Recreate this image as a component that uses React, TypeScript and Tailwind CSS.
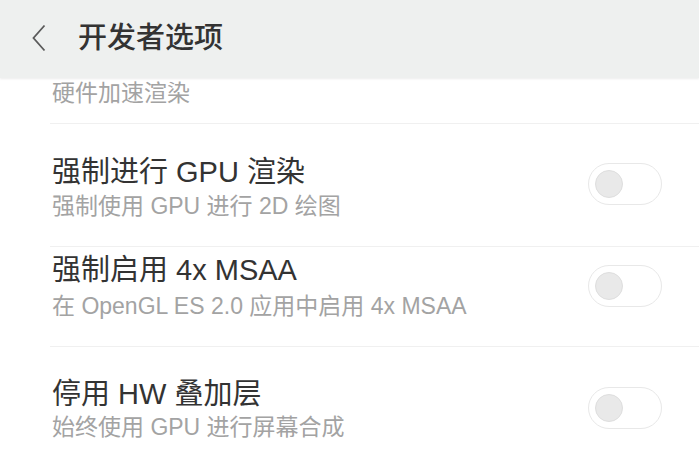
const font = { fontFamily: '"Liberation Sans", "Noto Sans CJK SC", sans-serif' };

const Toggle = ({ top }: { top: string }) => (
  <div className={`${top} mr-[37px] w-[74px] h-[42px] rounded-full border-[1.5px] border-[#e8e8e8] bg-white flex items-center pl-[6px] shrink-0`}>
    <div className="w-[28px] h-[28px] rounded-full bg-[#e9e9e9] border border-[#dedede]" />
  </div>
);

const App = () => {
  // developer options screen
  return (
    <div className="w-[699px] h-[455px] overflow-hidden bg-white" style={font}>
      <div className="h-[78px] bg-[#eef0ef] flex items-center shadow-[0_1px_2px_rgba(0,0,0,0.08)] relative">
        <svg width="14" height="28" viewBox="0 0 14 28" className="ml-[32px] mt-[-2px]">
          <path d="M12.5 1.5 L1.5 14 L12.5 26.5" fill="none" stroke="#5a5a5a" strokeWidth="1.8" />
        </svg>
        <span className="ml-[32px] text-[29px] leading-[36px] font-medium text-[#333] mt-[-3px]">
          开发者选项
        </span>
      </div>

      <div className="ml-[50px] h-[46px] border-b border-[#f0f0f0] pt-[1px]">
        <p className="ml-[2px] text-[23px] leading-[28px] text-[#a3a3a3]">硬件加速渲染</p>
      </div>

      <div className="ml-[50px] h-[123px] border-b border-[#f0f0f0] pt-[31px] flex justify-between items-start">
        <div className="ml-[2px]">
          <p className="text-[29px] leading-[34px] text-[#333]">强制进行 GPU 渲染</p>
          <p className="text-[23px] leading-[28px] mt-[3px] text-[#a3a3a3]">强制使用 GPU 进行 2D 绘图</p>
        </div>
        <Toggle top="mt-[8px]" />
      </div>

      <div className="ml-[50px] h-[100px] border-b border-[#f0f0f0] pt-[6px] flex justify-between items-start">
        <div className="ml-[2px]">
          <p className="text-[29px] leading-[34px] text-[#333]">强制启用 4x MSAA</p>
          <p className="text-[23px] leading-[28px] mt-[5px] text-[#a3a3a3]">在 OpenGL ES 2.0 应用中启用 4x MSAA</p>
        </div>
        <Toggle top="mt-[12px]" />
      </div>

      <div className="ml-[50px] h-[108px] pt-[30px] flex justify-between items-start">
        <div className="ml-[2px]">
          <p className="text-[29px] leading-[34px] text-[#333]">停用 HW 叠加层</p>
          <p className="text-[23px] leading-[28px] mt-[2px] text-[#a3a3a3]">始终使用 GPU 进行屏幕合成</p>
        </div>
        <Toggle top="mt-[10px]" />
      </div>
    </div>
  );
};

export default App;
